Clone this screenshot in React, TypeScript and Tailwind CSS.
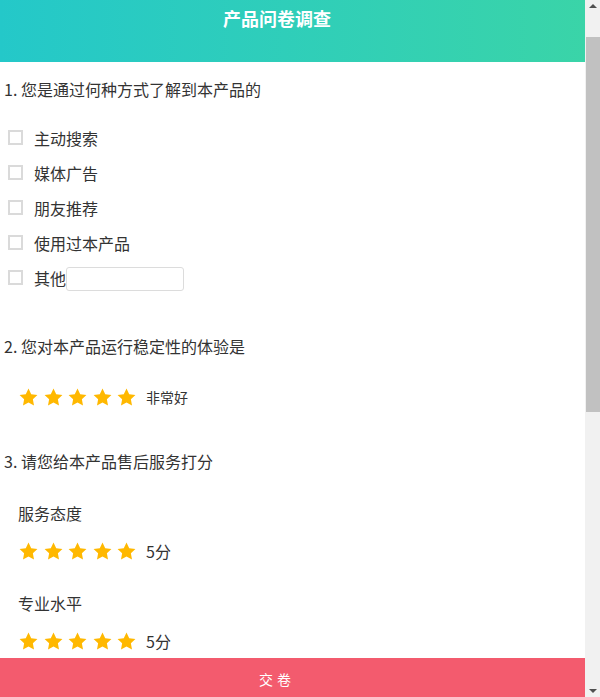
import { useState } from "react";

const sources = ["主动搜索", "媒体广告", "朋友推荐", "使用过本产品"];

const serviceItems = [
  { id: 1, name: "服务态度" },
  { id: 2, name: "专业水平" },
  { id: 3, name: "响应速度" },
  { id: 4, name: "解决问题能力" },
];

const feel = ["", "非常差", "差", "一般", "好", "非常好"];

function Star({ on }: { on: boolean }) {
  return (
    <svg viewBox="0 0 24 24" className="h-[21px] w-[21px]">
      <polygon
        points="12,1.8 15.1,8.3 22.2,9.2 17,14.1 18.3,21.2 12,17.8 5.7,21.2 7,14.1 1.8,9.2 8.9,8.3"
        fill={on ? "#ffb800" : "#e2e2e2"}
      />
    </svg>
  );
}

function Rating({
  value,
  onChange,
  label,
  small,
}: {
  value: number;
  onChange: (v: number) => void;
  label: string;
  small?: boolean;
}) {
  return (
    <div className="flex items-center h-[26px]">
      <div className="flex items-center gap-[3.5px]">
        {[1, 2, 3, 4, 5].map((n) => (
          <button key={n} onClick={() => onChange(n)} className="p-0 cursor-pointer">
            <Star on={n <= value} />
          </button>
        ))}
      </div>
      <span className={small ? "ml-[9px] text-[14px]" : "ml-[9px] text-[16px]"}>{label}</span>
    </div>
  );
}

function Check({ on, onClick }: { on: boolean; onClick: () => void }) {
  return (
    <button
      onClick={onClick}
      className={
        on
          ? "h-[15px] w-[15px] border-2 border-[#3ad4a8] bg-[#3ad4a8]"
          : "h-[15px] w-[15px] border-2 border-[#dadada] bg-white"
      }
    />
  );
}

// page scrollbar rail on the right
function ScrollRail() {
  return (
    <div className="flex w-[15px] shrink-0 flex-col bg-[#f1f1f1]">
      <div className="flex h-[17px] items-start justify-center pt-[4px]">
        <svg viewBox="0 0 8 4" className="h-[4px] w-[8px]">
          <polygon points="4,0 8,4 0,4" fill="#505050" />
        </svg>
      </div>
      <div className="flex-1 pl-[1px]">
        <div className="mt-[20px] h-[375px] bg-[#c1c1c1]" />
      </div>
      <div className="flex h-[17px] items-end justify-center pb-[4px]">
        <svg viewBox="0 0 8 4" className="h-[4px] w-[8px]">
          <polygon points="0,0 8,0 4,4" fill="#505050" />
        </svg>
      </div>
    </div>
  );
}

export default function App() {
  const [checked, setChecked] = useState<string[]>([]);
  const [other, setOther] = useState("");
  const [stability, setStability] = useState(5);
  const [scores, setScores] = useState<Record<number, number>>({ 1: 5, 2: 5, 3: 5, 4: 5 });
  const [recommend, setRecommend] = useState("");

  const toggle = (s: string) =>
    setChecked((c) => (c.includes(s) ? c.filter((x) => x !== s) : [...c, s]));

  return (
    <div className="flex h-screen bg-white text-[#333] font-['Noto_Sans_CJK_SC','Noto_Sans',sans-serif]">
      <div className="min-w-0 flex-1 overflow-y-auto [scrollbar-width:none]">
        <header className="sticky top-0 z-10 h-[62px] bg-gradient-to-r from-[#24c8c9] to-[#3ad4a8] pr-[31px] text-white">
          <h1 className="text-center text-[18px] font-bold leading-[37px]">产品问卷调查</h1>
        </header>

        <main className="pt-[16px] pb-[24px]">
          <section>
            <h2 className="pl-[4px] text-[16px] leading-[22px]">1. 您是通过何种方式了解到本产品的</h2>
            <ul className="mt-[20px]">
              {sources.map((s) => (
                <li key={s} className="flex items-center h-[35px] pl-[8px]">
                  <Check on={checked.includes(s)} onClick={() => toggle(s)} />
                  <span className="ml-[11px] text-[16px]">{s}</span>
                </li>
              ))}
              <li className="flex items-center h-[35px] pl-[8px]">
                <Check on={checked.includes("其他")} onClick={() => toggle("其他")} />
                <span className="ml-[11px] text-[16px]">其他</span>
                <input
                  type="text"
                  value={other}
                  onChange={(e) => setOther(e.target.value)}
                  className="mt-[3px] h-[24px] w-[118px] rounded-[3px] border border-[#dcdcdc] px-1 text-[13px] outline-none"
                />
              </li>
            </ul>
          </section>

          <section className="mt-[40px]">
            <h2 className="pl-[4px] text-[16px] leading-[22px]">2. 您对本产品运行稳定性的体验是</h2>
            <div className="mt-[27px] pl-[18px]">
              <Rating value={stability} onChange={setStability} label={feel[stability]} small />
            </div>
          </section>

          <section className="mt-[40px]">
            <h2 className="pl-[4px] text-[16px] leading-[22px]">3. 请您给本产品售后服务打分</h2>
            <div className="mt-[30px] pl-[18px]">
              {serviceItems.map((it) => (
                <div key={it.id} className="mb-[28px]">
                  <div className="text-[16px] leading-[22px]">{it.name}</div>
                  <div className="mt-[14px]">
                    <Rating
                      value={scores[it.id]}
                      onChange={(v) => setScores((p) => ({ ...p, [it.id]: v }))}
                      label={`${scores[it.id]}分`}
                    />
                  </div>
                </div>
              ))}
            </div>
          </section>

          <section className="mt-[12px]">
            <h2 className="pl-[4px] text-[16px] leading-[22px]">4. 您对本产品还有哪些意见或建议</h2>
            <div className="mt-[18px] px-[18px]">
              <textarea className="h-[120px] w-full rounded-[3px] border border-[#dcdcdc] p-2 text-[14px] outline-none" />
            </div>
          </section>

          <section className="mt-[40px]">
            <h2 className="pl-[4px] text-[16px] leading-[22px]">5. 您是否愿意向朋友推荐本产品</h2>
            <ul className="mt-[16px]">
              {["愿意", "不愿意"].map((r) => (
                <li key={r} className="flex items-center h-[35px] pl-[8px]">
                  <button
                    onClick={() => setRecommend(r)}
                    className={
                      recommend === r
                        ? "h-[15px] w-[15px] rounded-full border-[4px] border-[#3ad4a8] bg-white"
                        : "h-[15px] w-[15px] rounded-full border-2 border-[#dadada] bg-white"
                    }
                  />
                  <span className="ml-[11px] text-[16px]">{r}</span>
                </li>
              ))}
            </ul>
          </section>
        </main>

        <footer className="sticky bottom-0 z-10">
          <button className="h-[39px] w-full bg-[#f35b6e] pt-[3px] pr-[31px] text-[14px] tracking-[4px] text-white">交卷</button>
        </footer>
      </div>
      <ScrollRail />
    </div>
  );
}
